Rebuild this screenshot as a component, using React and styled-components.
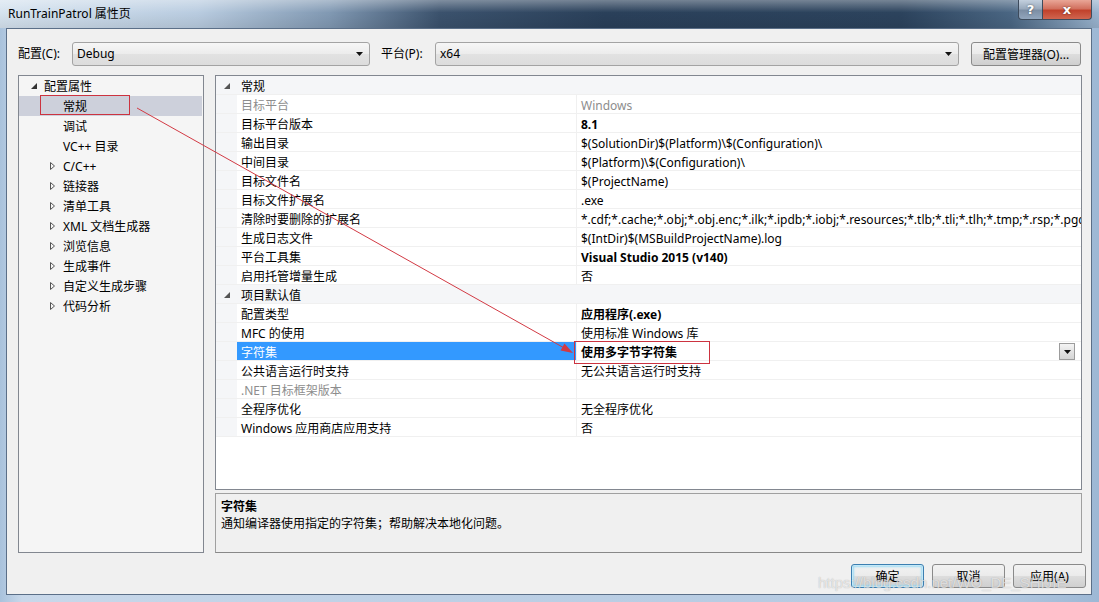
import React from 'react'
import styled, { createGlobalStyle, css } from 'styled-components'

const GlobalStyle = createGlobalStyle`
  html, body {
    margin: 0;
    padding: 0;
  }
  body {
    font-family: "Noto Sans", "Noto Sans CJK SC", sans-serif;
    font-size: 12px;
    color: #000;
    background: #fff;
  }
`

const Window = styled.div`
  position: relative;
  width: 1099px;
  height: 602px;
  display: flex;
  flex-direction: column;
  overflow: hidden;
  background: linear-gradient(90deg, #a9c2dc 0%, #c8d8ea 2%, #bdd0e5 40%, #b3c9e1 90%, #9db8d5 100%);
`

const TitleBar = styled.div`
  flex: none;
  height: 28px;
  display: flex;
  align-items: flex-start;
  justify-content: space-between;
  background:
    linear-gradient(180deg, rgba(255, 255, 255, 0.35) 0%, rgba(255, 255, 255, 0) 45%, rgba(0, 0, 0, 0.08) 100%),
    linear-gradient(90deg, #d6e3ef 0%, #b9cce0 18%, #8199b3 30%, #3b526d 40%, #2a405a 55%, #2c435d 82%, #4a6683 92%, #9ab4cf 100%);
`

const Title = styled.div`
  padding: 6px 0 0 8px;
  font-size: 12px;
  line-height: 16px;
  color: #000;
`

const CaptionButtons = styled.div`
  display: flex;
  margin-right: 7px;
`

const CaptionButton = styled.div`
  width: ${p => p.$w}px;
  height: 20px;
  box-sizing: border-box;
  display: flex;
  align-items: center;
  justify-content: center;
  border: 1px solid #3d4b5c;
  border-top: none;
  color: #fff;
  font-family: "DejaVu Sans", sans-serif;
  font-weight: bold;
  font-size: 13px;
  text-shadow: 0 0 2px rgba(0, 0, 0, 0.6);
  ${p => p.$close ? css`
    border-left: none;
    border-radius: 0 0 4px 0;
    background: linear-gradient(180deg, #e9a697 0%, #d2715f 45%, #c1422c 55%, #d0654f 100%);
  ` : css`
    border-radius: 0 0 0 4px;
    background: linear-gradient(180deg, #c3d0de 0%, #9aaabd 45%, #7c8ea4 55%, #92a6bd 100%);
  `}
`

const Client = styled.div`
  flex: 1;
  min-height: 0;
  margin: 0 7px 7px 6px;
  border: 1px solid #5b6f88;
  background: #f0f0f0;
  display: flex;
  flex-direction: column;
`

const TopRow = styled.div`
  display: flex;
  align-items: center;
  height: 24px;
  padding: 13px 10px 0 11px;
`

const FieldLabel = styled.span`
  flex: none;
  width: 54px;
  line-height: 24px;
  ${p => p.$gap && css`margin-left: 11px;`}
`

const Combo = styled.div`
  box-sizing: border-box;
  height: 24px;
  ${p => p.$width ? css`width: ${p.$width}px; flex: none;` : css`flex: 1;`}
  display: flex;
  align-items: center;
  justify-content: space-between;
  padding: 0 6px 0 4px;
  border: 1px solid #a3a3a3;
  border-radius: 3px;
  background: linear-gradient(180deg, #f6f6f6 0%, #ececec 50%, #e2e2e2 51%, #dcdcdc 100%);
  line-height: 22px;
`

const PushButton = styled.button`
  box-sizing: border-box;
  height: 24px;
  width: ${p => p.$width || 73}px;
  margin: 0;
  padding: 0;
  font: inherit;
  color: #000;
  border: 1px solid ${p => p.$focused ? '#3c7fb1' : '#8a8a8a'};
  border-radius: 3px;
  background: linear-gradient(180deg, #f2f2f2 0%, #ebebeb 50%, #dddddd 51%, #cfcfcf 100%);
  ${p => p.$focused && css`
    box-shadow: inset 0 0 0 1px #c4e8f7, inset 0 0 2px 2px #9fdcf5;
  `}
  ${p => p.$ml && css`margin-left: ${p.$ml}px;`}
`

const Body = styled.div`
  flex: 1;
  min-height: 0;
  display: flex;
  gap: 11px;
  margin-top: 9px;
  padding: 0 9px 0 11px;
`

const Tree = styled.div`
  flex: none;
  width: 186px;
  box-sizing: border-box;
  border: 1px solid #828790;
  background: #f5f5f5;
`

const TreeItem = styled.div`
  height: 20px;
  display: flex;
  align-items: center;
  margin: 0 1px 0 0;
  padding-left: ${p => p.$level * 19 + 10}px;
  background: ${p => p.$selected ? '#cdd0db' : 'transparent'};
  white-space: nowrap;
`

const Expander = styled.span`
  flex: none;
  width: 15px;
  height: 20px;
  display: flex;
  align-items: center;
  padding-left: 2px;
  box-sizing: border-box;
`

const RightColumn = styled.div`
  flex: 1;
  min-width: 0;
  display: flex;
  flex-direction: column;
  gap: 3px;
`

const Grid = styled.div`
  flex: 1;
  min-height: 0;
  box-sizing: border-box;
  border: 1px solid #828790;
  background: #fff;
  overflow: hidden;
`

const Row = styled.div`
  display: grid;
  grid-template-columns: ${p => p.$category ? '21px 1fr' : '21px 340px 1fr'};
  height: 19px;
  box-sizing: border-box;
  border-bottom: 1px solid #f0f0f0;
  background: ${p => p.$category ? '#f5f6f8' : '#fff'};
  ${p => p.$category && css`font-weight: bold;`}
`

const Gutter = styled.div`
  background: #f5f6f8;
  display: flex;
  align-items: center;
  justify-content: center;
  padding-top: 2px;
`

const Cell = styled.div`
  padding: 3px 0 0 4px;
  line-height: 16px;
  white-space: nowrap;
  overflow: hidden;
  color: ${p => p.$dim ? '#8d8d8d' : p.$selected ? '#fff' : '#000'};
  font-weight: ${p => p.$bold ? 'bold' : 'normal'};
  ${p => p.$name && css`border-right: 1px solid #f0f0f0;`}
  ${p => p.$selected && css`background: #3399ff;`}
`

const ValueCell = styled(Cell)`
  display: flex;
  justify-content: space-between;
  align-items: flex-start;
  padding-right: 6px;
  padding-top: 0;
`

const ValueText = styled.span`
  padding-top: 3px;
`

const DropButton = styled.span`
  flex: none;
  width: 16px;
  height: 17px;
  margin-top: 1px;
  box-sizing: border-box;
  display: flex;
  align-items: center;
  justify-content: center;
  border: 1px solid #9c9c9c;
  background: linear-gradient(180deg, #f4f4f4 0%, #e3e3e3 50%, #d5d5d5 100%);
`

const Description = styled.div`
  flex: none;
  height: 60px;
  box-sizing: border-box;
  border: 1px solid #a0a0a0;
  border-bottom-color: #888;
  background: #f0f0f0;
  padding: 4px 5px;
  line-height: 17px;
`

const DescTitle = styled.div`
  font-weight: bold;
`

const ButtonRow = styled.div`
  display: flex;
  justify-content: flex-end;
  gap: 8px;
  margin-top: 11px;
  padding: 0 5px 6px 0;
`

const Overlay = styled.svg`
  position: absolute;
  left: 0;
  top: 0;
  pointer-events: none;
`

const Watermark = styled.div`
  position: absolute;
  left: 818px;
  top: 574px;
  font-family: "Liberation Sans", sans-serif;
  font-size: 15px;
  color: rgba(255, 255, 255, 0.65);
  text-shadow: 0 0 1px rgba(60, 60, 60, 0.4);
  pointer-events: none;
  white-space: nowrap;
`

const DownArrow = () => (
  <svg width="7" height="4" viewBox="0 0 7 4">
    <path d="M0 0 H7 L3.5 4 Z" fill="#111" />
  </svg>
)

const ExpandedIcon = ({ color = '#333' }) => (
  <svg width="6" height="6" viewBox="0 0 6 6">
    <path d="M6 0 V6 H0 Z" fill={color} />
  </svg>
)

const CollapsedIcon = () => (
  <svg width="5" height="8" viewBox="0 0 5 8">
    <path d="M0.5 0.5 L4.5 4 L0.5 7.5 Z" fill="none" stroke="#555" strokeWidth="1" />
  </svg>
)

const treeItems = [
  { label: '配置属性', level: 0, expanded: true },
  { label: '常规', level: 1, selected: true },
  { label: '调试', level: 1 },
  { label: 'VC++ 目录', level: 1 },
  { label: 'C/C++', level: 1, collapsed: true },
  { label: '链接器', level: 1, collapsed: true },
  { label: '清单工具', level: 1, collapsed: true },
  { label: 'XML 文档生成器', level: 1, collapsed: true },
  { label: '浏览信息', level: 1, collapsed: true },
  { label: '生成事件', level: 1, collapsed: true },
  { label: '自定义生成步骤', level: 1, collapsed: true },
  { label: '代码分析', level: 1, collapsed: true },
]

const properties = [
  { category: '常规' },
  { name: '目标平台', value: 'Windows', dim: true },
  { name: '目标平台版本', value: '8.1', bold: true },
  { name: '输出目录', value: '$(SolutionDir)$(Platform)\\$(Configuration)\\' },
  { name: '中间目录', value: '$(Platform)\\$(Configuration)\\' },
  { name: '目标文件名', value: '$(ProjectName)' },
  { name: '目标文件扩展名', value: '.exe' },
  { name: '清除时要删除的扩展名', value: '*.cdf;*.cache;*.obj;*.obj.enc;*.ilk;*.ipdb;*.iobj;*.resources;*.tlb;*.tli;*.tlh;*.tmp;*.rsp;*.pgc;*.pgd;*.meta;*.tlog;*.manifest;*.res' },
  { name: '生成日志文件', value: '$(IntDir)$(MSBuildProjectName).log' },
  { name: '平台工具集', value: 'Visual Studio 2015 (v140)', bold: true },
  { name: '启用托管增量生成', value: '否' },
  { category: '项目默认值' },
  { name: '配置类型', value: '应用程序(.exe)', bold: true },
  { name: 'MFC 的使用', value: '使用标准 Windows 库' },
  { name: '字符集', value: '使用多字节字符集', bold: true, selected: true },
  { name: '公共语言运行时支持', value: '无公共语言运行时支持' },
  { name: '.NET 目标框架版本', value: '', dim: true },
  { name: '全程序优化', value: '无全程序优化' },
  { name: 'Windows 应用商店应用支持', value: '否' },
]

function PropertyRow({ item }) {
  if (item.category) {
    return (
      <Row $category>
        <Gutter><ExpandedIcon color="#555" /></Gutter>
        <Cell>{item.category}</Cell>
      </Row>
    )
  }
  return (
    <Row>
      <Gutter />
      <Cell $name $dim={item.dim} $selected={item.selected}>{item.name}</Cell>
      {item.selected ? (
        <ValueCell $bold={item.bold}>
          <ValueText>{item.value}</ValueText>
          <DropButton><DownArrow /></DropButton>
        </ValueCell>
      ) : (
        <Cell $dim={item.dim} $bold={item.bold}>{item.value}</Cell>
      )}
    </Row>
  )
}

export default function App() {
  return (
    <>
      <GlobalStyle />
      <Window>
        <TitleBar>
          <Title>RunTrainPatrol 属性页</Title>
          <CaptionButtons>
            <CaptionButton $w={25}>?</CaptionButton>
            <CaptionButton $w={49} $close>x</CaptionButton>
          </CaptionButtons>
        </TitleBar>

        <Client>
          <TopRow>
            <FieldLabel>配置(C):</FieldLabel>
            <Combo $width={298}>
              <span>Debug</span>
              <DownArrow />
            </Combo>
            <FieldLabel $gap>平台(P):</FieldLabel>
            <Combo>
              <span>x64</span>
              <DownArrow />
            </Combo>
            <PushButton $width={110} $ml={12}>配置管理器(O)...</PushButton>
          </TopRow>

          <Body>
            <Tree>
              {treeItems.map(item => (
                <TreeItem key={item.label} $level={item.level} $selected={item.selected}>
                  <Expander>
                    {item.expanded && <ExpandedIcon />}
                    {item.collapsed && <CollapsedIcon />}
                  </Expander>
                  <span>{item.label}</span>
                </TreeItem>
              ))}
            </Tree>

            <RightColumn>
              <Grid>
                {properties.map((item, i) => (
                  <PropertyRow key={i} item={item} />
                ))}
              </Grid>
              <Description>
                <DescTitle>字符集</DescTitle>
                <div>通知编译器使用指定的字符集；帮助解决本地化问题。</div>
              </Description>
            </RightColumn>
          </Body>

          <ButtonRow>
            <PushButton $focused>确定</PushButton>
            <PushButton>取消</PushButton>
            <PushButton>应用(A)</PushButton>
          </ButtonRow>
        </Client>

        {/* red annotation: two boxes and the arrow between them */}
        <Overlay width="1099" height="602" viewBox="0 0 1099 602">
          <rect x="40.5" y="95.5" width="89" height="19" fill="none" stroke="#cc3340" strokeWidth="1" />
          <rect x="574.5" y="341.5" width="135" height="22" fill="none" stroke="#cc3340" strokeWidth="1" />
          <line x1="137" y1="108" x2="566" y2="349" stroke="#d23a44" strokeWidth="1" />
          <path d="M573 353 L564.5 343.6 L560.5 350.6 Z" fill="#d23a44" />
        </Overlay>
        <Watermark>https://blog.csdn.net/WO_DE_SHIJIE</Watermark>
      </Window>
    </>
  )
}
